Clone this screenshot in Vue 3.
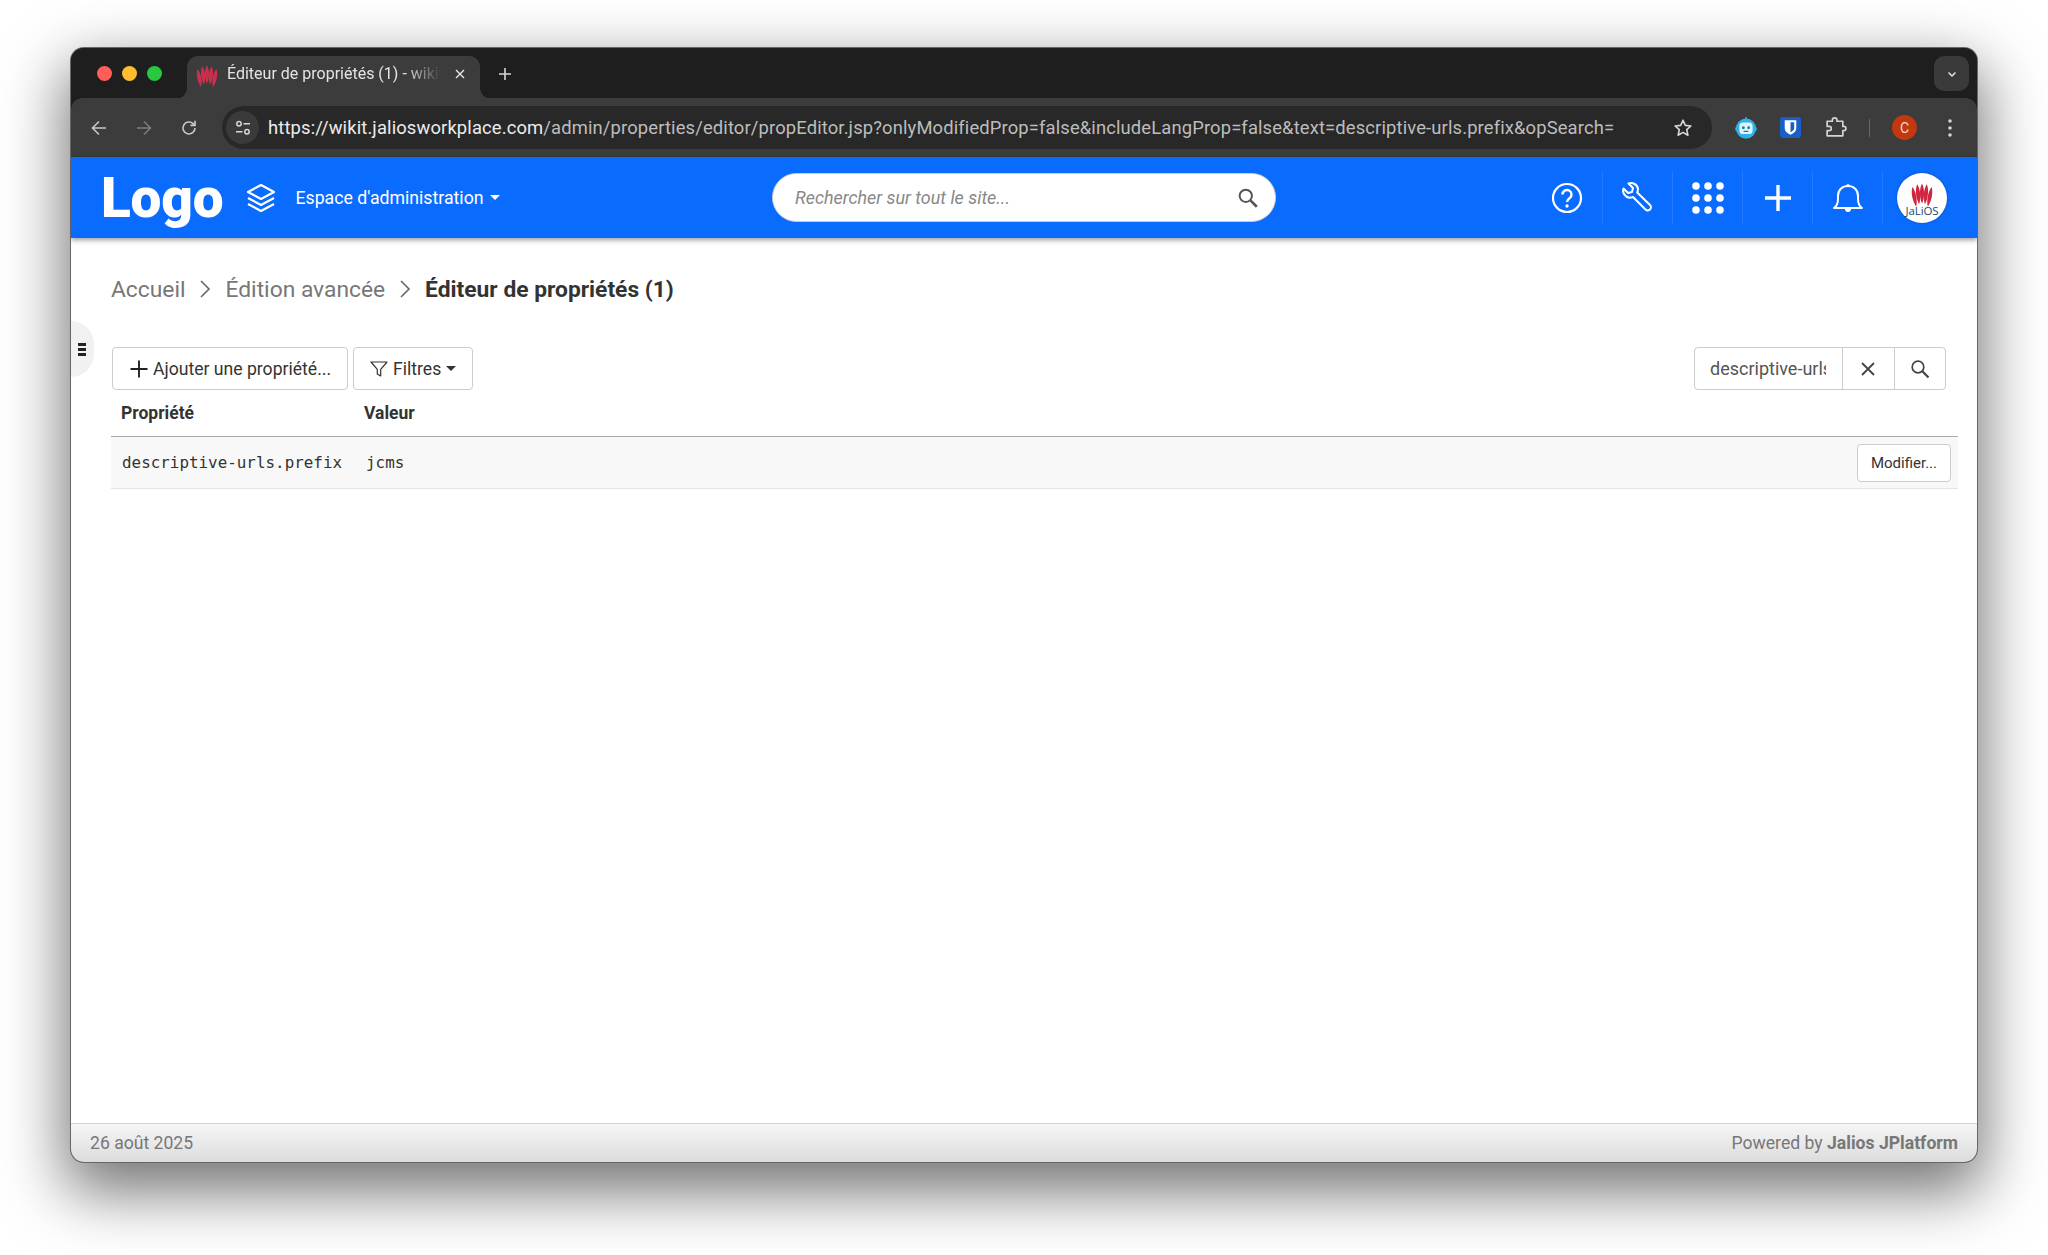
<script setup>
const petals = [-2, -1, 0, 1, 2]
const fan = (a) => `translate(${a * 3.300} ${a * a * 0.900}) rotate(${a * 5.500} 12 22)`
const rows = [{ key: 'descriptive-urls.prefix', value: 'jcms' }]
</script>

<template>
  <div class="desktop">
    <div class="window">
      <div class="tabstrip">
        <div class="lights"><i class="red"></i><i class="yellow"></i><i class="green"></i></div>
        <div class="tab">
          <svg class="favicon" viewBox="0 0 24 24">
            <g fill="#c9304f">
              <path v-for="a in petals" :key="a" d="M12 22.500 C8.800 16 9.300 7 12 2.500 C14.700 7 15.200 16 12 22.500Z" :transform="fan(a)" />
            </g>
          </svg>
          <span class="tab-title">Éditeur de propriétés (1) - wikit</span>
          <svg class="tab-close" viewBox="0 0 12 12"><path d="M2 2l8 8M10 2l-8 8" stroke="#e8e8e8" stroke-width="1.4" /></svg>
        </div>
        <svg class="new-tab" viewBox="0 0 14 14"><path d="M7 1v12M1 7h12" stroke="#d8d8d8" stroke-width="1.6" /></svg>
        <div class="tab-menu"><svg viewBox="0 0 12 12"><path d="M2.5 4.5L6 8l3.5-3.5" fill="none" stroke="#e4e4e4" stroke-width="1.5" /></svg></div>
      </div>

      <div class="toolbar">
        <svg class="nav back" viewBox="0 0 18 18"><path d="M16 9H2.5M9 2.5L2.5 9 9 15.5" fill="none" stroke="#c8c8c8" stroke-width="1.6" /></svg>
        <svg class="nav fwd" viewBox="0 0 18 18"><path d="M2 9h13.5M9 2.5L15.5 9 9 15.5" fill="none" stroke="#7c7c7c" stroke-width="1.6" /></svg>
        <svg class="nav reload" viewBox="0 0 18 18"><path d="M15 9a6 6 0 1 1-1.9-4.4L15 6.3M15 1.8v4.6h-4.6" fill="none" stroke="#c8c8c8" stroke-width="1.6" /></svg>
        <div class="omnibox">
          <div class="site-info">
            <svg viewBox="0 0 18 18"><g fill="none" stroke="#d8d8d8" stroke-width="1.5"><circle cx="5" cy="4.8" r="2.2" /><path d="M9.5 4.8h6.5M2 12.8h6.5" /><circle cx="13" cy="12.8" r="2.2" /></g></svg>
          </div>
          <div class="url"><span class="host">https://wikit.jaliosworkplace.com</span>/admin/properties/editor/propEditor.jsp?onlyModifiedProp=false&amp;includeLangProp=false&amp;text=descriptive-urls.prefix&amp;opSearch=</div>
          <svg class="star" viewBox="0 0 20 20"><path d="M10 2.2l2.3 5.2 5.6.6-4.2 3.7 1.2 5.5L10 14.4l-4.9 2.8 1.2-5.5L2.100 8l5.600-.6z" fill="none" stroke="#d8d8d8" stroke-width="1.6" stroke-linejoin="round" /></svg>
        </div>
        <div class="ext-icons">
          <svg class="ext robot" viewBox="0 0 20 20"><circle cx="10" cy="10.500" r="8.400" fill="#2fb2ea" /><rect x="1" y="9" width="18" height="3.500" rx="1.500" fill="#2fb2ea" /><path d="M10 1v2.500" stroke="#2fb2ea" stroke-width="1.400" /><rect x="4.500" y="5.500" width="11" height="9.500" rx="3" fill="#dff4fc" /><circle cx="7.800" cy="9.800" r="1.200" fill="#1a7fb0" /><circle cx="12.200" cy="9.800" r="1.200" fill="#1a7fb0" /><path d="M8 12.800h4" stroke="#1a7fb0" /></svg>
          <svg class="ext warden" viewBox="0 0 20 20"><rect width="20" height="20" rx="3" fill="#1a5fc8" /><path d="M4.500 3h11v7.500c0 3.400-3 5.300-5.500 6.500-2.500-1.200-5.500-3.100-5.500-6.500z" fill="#fff" /><path d="M10 5h3.500v5.500c0 2-1.800 3.200-3.500 4.100z" fill="#1a5fc8" /></svg>
          <svg class="ext puzzle" viewBox="0 0 22 22"><path d="M3 5h5V4a2.200 2.200 0 0 1 4.400 0v1H18v5h1a2 2 0 0 1 0 4h-1v5H3v-5h2a2 2 0 0 0 0-4H3z" fill="none" stroke="#d4d4d4" stroke-width="1.600" stroke-linejoin="round" /></svg>
          <span class="tool-sep"></span>
          <span class="profile">C</span>
          <svg class="kebab" viewBox="0 0 6 20"><g fill="#d4d4d4"><circle cx="3" cy="3" r="1.800" /><circle cx="3" cy="10" r="1.800" /><circle cx="3" cy="17" r="1.800" /></g></svg>
        </div>
      </div>

      <header class="topbar">
        <div class="brand">
          <span class="logo">Logo</span>
          <svg class="layers" viewBox="0 0 32 32"><g fill="none" stroke="#fff" stroke-width="2.200" stroke-linejoin="round"><path d="M16 3L29 10 16 17 3 10z" /><path d="M3 16l13 7 13-7" /><path d="M3 22l13 7 13-7" /></g></svg>
          <span class="space">Espace d'administration</span><i class="caret white"></i>
        </div>
        <div class="site-search">
          <span>Rechercher sur tout le site...</span>
          <svg viewBox="0 0 20 20"><circle cx="8" cy="8" r="5.600" fill="none" stroke="#555" stroke-width="1.800" /><path d="M12.200 12.200L18 18" stroke="#555" stroke-width="2.400" /></svg>
        </div>
        <nav class="actions">
          <div class="action first">
            <svg viewBox="0 0 32 32"><circle cx="16" cy="16" r="14" fill="none" stroke="#fff" stroke-width="2.200" /><path d="M11.500 12.500a4.500 4.500 0 1 1 7 3.700c-1.600 1.100-2.500 2-2.500 3.800" fill="none" stroke="#fff" stroke-width="2.400" /><circle cx="16" cy="24" r="1.700" fill="#fff" /></svg>
          </div>
          <div class="action">
            <svg viewBox="0 0 32 32"><path d="M1.500 6.500L6 11l4-1 1-4-4.500-4.500c4-1.500 9 1 9.500 5.500 0 1.500-.3 2.500-.8 3.500L28 23c1.500 1.500 1 3.500 0 4.500s-3 1.500-4.500 0L11 15c-1 .5-2 .7-3.500.7C3 15.200 0 10.500 1.500 6.500z" fill="none" stroke="#fff" stroke-width="2" stroke-linejoin="round" /></svg>
          </div>
          <div class="action">
            <svg viewBox="0 0 32 32"><g fill="#fff"><template v-for="y in [4, 16, 28]" :key="y"><circle v-for="x in [4, 16, 28]" :key="x" :cx="x" :cy="y" r="3.800" /></template></g></svg>
          </div>
          <div class="action">
            <svg viewBox="0 0 32 32"><path d="M16 3v26M3 16h26" stroke="#fff" stroke-width="3.400" /></svg>
          </div>
          <div class="action">
            <svg viewBox="0 0 32 32"><path d="M2 26c3-2 4-5 4-9v-3c0-6 4-10 10-10s10 4 10 10v3c0 4 1 7 4 9z" fill="none" stroke="#fff" stroke-width="2" stroke-linejoin="round" /><path d="M13 27a3 3 0 0 0 6 0" fill="#fff" /><circle cx="16" cy="3.500" r="1.500" fill="#fff" /></svg>
          </div>
          <div class="action avatar-cell">
            <div class="avatar">
              <svg viewBox="0 0 24 24">
                <g fill="#d0263f">
                  <path v-for="a in petals" :key="a" d="M12 23.500 C8.800 16 9.300 6.500 12 1.500 C14.700 6.500 15.200 16 12 23.500Z" :transform="fan(a)" />
                </g>
              </svg>
              <span>JaLiOS</span>
            </div>
          </div>
        </nav>
      </header>

      <main class="content">
        <div class="side-handle"><i></i><i></i><i></i></div>
        <div class="breadcrumb">
          <span>Accueil</span>
          <svg viewBox="0 0 12 20"><path d="M2 2l8 8-8 8" fill="none" stroke="#666" stroke-width="1.600" /></svg>
          <span>Édition avancée</span>
          <svg viewBox="0 0 12 20"><path d="M2 2l8 8-8 8" fill="none" stroke="#666" stroke-width="1.600" /></svg>
          <strong>Éditeur de propriétés (1)</strong>
        </div>

        <div class="tools">
          <button class="btn add">
            <svg viewBox="0 0 18 18"><path d="M9 0.500v17M0.500 9h17" stroke="#222" stroke-width="1.900" /></svg>
            Ajouter une propriété...
          </button>
          <button class="btn filter">
            <svg viewBox="0 0 18 18"><path d="M1 2h16l-6.300 7.300V16l-3.400-2V9.300z" fill="none" stroke="#333" stroke-width="1.200" stroke-linejoin="round" /></svg>
            Filtres<i class="caret dark"></i>
          </button>
          <div class="search-group">
            <div class="search-value"><span>descriptive-urls.prefix</span></div>
            <div class="search-btn">
              <svg viewBox="0 0 16 16"><path d="M2 2l12 12M14 2L2 14" stroke="#444" stroke-width="1.800" /></svg>
            </div>
            <div class="search-btn">
              <svg viewBox="0 0 20 20"><circle cx="8" cy="8" r="5.800" fill="none" stroke="#444" stroke-width="1.700" /><path d="M12.300 12.300L18.500 18.500" stroke="#444" stroke-width="2.200" /></svg>
            </div>
          </div>
        </div>

        <div class="table-head"><span>Propriété</span><span>Valeur</span></div>
        <div v-for="r in rows" :key="r.key" class="table-row">
          <code>{{ r.key }}</code>
          <code>{{ r.value }}</code>
          <button class="btn modify">Modifier...</button>
        </div>
      </main>

      <footer class="foot">
        <span>26 août 2025</span>
        <span>Powered by <b>Jalios JPlatform</b></span>
      </footer>
    </div>
  </div>
</template>

<style>
html, body { margin: 0; background: #fff; }
</style>

<style scoped>
.desktop {
  box-sizing: border-box;
  width: 2048px;
  height: 1255px;
  padding: 48px 71px 93px 71px;
  background: #fff;
  overflow: hidden;
  font-family: Roboto, "Liberation Sans", sans-serif;
}
.window {
  height: 100%;
  display: flex;
  flex-direction: column;
  border-radius: 13px;
  overflow: hidden;
  background: #1e1e1e;
  box-shadow: 0 0 0 1px #666, 0 24px 62px 6px rgba(0, 0, 0, 0.55);
}
.tabstrip {
  height: 51px;
  flex: none;
  display: flex;
  align-items: flex-end;
  background: #1e1e1e;
  position: relative;
}
.lights {
  display: flex;
  gap: 10px;
  align-self: flex-start;
  margin: 18px 0 0 26px;
  width: 90px;
}
.lights i { width: 15px; height: 15px; border-radius: 50%; }
.red { background: #ff5f57; }
.yellow { background: #febc2e; }
.green { background: #28c840; }
.tab {
  width: 293px;
  height: 43px;
  box-sizing: border-box;
  display: flex;
  align-items: center;
  padding: 0 14px 8px 9px;
  background: #3c3c3c;
  border-radius: 11px 11px 0 0;
  position: relative;
}
.tab::before, .tab::after {
  content: "";
  position: absolute;
  bottom: 0;
  width: 11px;
  height: 11px;
}
.tab::before { left: -11px; background: radial-gradient(circle at 0 0, #1e1e1e 10.500px, #3c3c3c 11px); }
.tab::after { right: -11px; background: radial-gradient(circle at 100% 0, #1e1e1e 10.500px, #3c3c3c 11px); }
.favicon { width: 22px; height: 22px; flex: none; overflow: visible; }
.tab-title {
  flex: 1;
  margin-left: 9px;
  font-size: 16px;
  color: #e4e4e4;
  white-space: nowrap;
  overflow: hidden;
  -webkit-mask-image: linear-gradient(to right, #000 80%, transparent 97%);
  mask-image: linear-gradient(to right, #000 80%, transparent 97%);
}
.tab-close { width: 12px; height: 12px; flex: none; margin-left: 6px; }
.new-tab { width: 14px; height: 14px; align-self: flex-start; margin: 19px 0 0 18px; }
.tab-menu {
  margin-left: auto;
  margin-right: 8px;
  align-self: flex-start;
  margin-top: 8px;
  width: 35px;
  height: 35px;
  border-radius: 10px;
  background: #3a3a3a;
  display: flex;
  align-items: center;
  justify-content: center;
}
.tab-menu svg { width: 12px; height: 12px; }

.toolbar {
  height: 59px;
  flex: none;
  display: flex;
  align-items: center;
  background: #3c3c3c;
  border-radius: 12px 12px 0 0;
  margin-top: -1px;
  position: relative;
  padding-left: 19px;
  box-sizing: border-box;
}
.nav { width: 18px; height: 18px; flex: none; }
.fwd { margin-left: 27px; }
.reload { margin-left: 27px; }
.omnibox {
  margin-left: 24px;
  width: 1490px;
  height: 43px;
  box-sizing: border-box;
  flex: none;
  display: flex;
  align-items: center;
  background: #282828;
  border-radius: 22px;
  padding: 0 19px 0 4px;
}
.site-info {
  width: 33px;
  height: 33px;
  border-radius: 50%;
  background: #3a3a3a;
  flex: none;
  display: flex;
  align-items: center;
  justify-content: center;
}
.site-info svg { width: 18px; height: 18px; }
.url {
  margin-left: 9px;
  width: 1350px;
  flex: none;
  font-size: 18.400px;
  letter-spacing: 0.130px;
  color: #bdbdbd;
  white-space: nowrap;
  overflow: hidden;
}
.host { color: #ececec; }
.star { width: 20px; height: 20px; margin-left: auto; flex: none; }
.ext-icons {
  display: flex;
  align-items: center;
  margin-left: 22px;
}
.robot { width: 24px; height: 24px; }
.warden { width: 21px; height: 21px; margin-left: 22px; }
.puzzle { width: 23px; height: 23px; margin-left: 23px; }
.tool-sep { width: 1px; height: 18px; background: #666; margin-left: 22px; }
.profile {
  width: 25px;
  height: 25px;
  margin-left: 22px;
  border-radius: 50%;
  background: #c2380f;
  color: #f4d8cc;
  font-size: 14px;
  display: flex;
  align-items: center;
  justify-content: center;
}
.kebab { width: 6px; height: 20px; margin-left: 30px; }

.topbar {
  height: 81px;
  flex: none;
  display: flex;
  align-items: center;
  background: #0a6cff;
  box-shadow: 0 2px 5px rgba(0, 0, 0, 0.4);
  position: relative;
  z-index: 1;
}
.brand {
  width: 701px;
  flex: none;
  display: flex;
  align-items: center;
  box-sizing: border-box;
  padding-left: 30px;
  color: #fff;
}
.logo { font-size: 55px; font-weight: 900; line-height: 1; margin-top: 2px; letter-spacing: -0.200px; }
.layers { width: 32px; height: 32px; margin-left: 21px; }
.space { font-size: 17.700px; margin-left: 19px; }
.caret {
  display: inline-block;
  width: 0;
  height: 0;
  margin-left: 6px;
  border-left: 5px solid transparent;
  border-right: 5px solid transparent;
}
.caret.white { border-top: 5px solid #fff; }
.caret.dark { border-top: 5px solid #333; margin-left: 0; }
.site-search {
  width: 504px;
  height: 49px;
  flex: none;
  box-sizing: border-box;
  display: flex;
  align-items: center;
  justify-content: space-between;
  padding: 0 16px 0 22px;
  background: #fff;
  border-radius: 25px;
  border: 1px solid #ccc;
  font-size: 17.900px;
  font-style: italic;
  color: #888;
}
.site-search svg { width: 22px; height: 22px; }
.actions { margin-left: auto; display: flex; align-items: center; height: 60px; }
.action {
  width: 70px;
  height: 53px;
  display: flex;
  align-items: center;
  justify-content: center;
  border-left: 1px solid rgba(255, 255, 255, 0.1);
  box-sizing: border-box;
}
.action.first { border-left: 0; }
.action svg { width: 32px; height: 32px; }
.avatar-cell { width: 95px; justify-content: flex-start; padding-left: 14px; }
.avatar {
  width: 50px;
  height: 50px;
  border-radius: 50%;
  background: #fff;
  box-shadow: 0 0 3px rgba(0, 0, 0, 0.3);
  display: flex;
  flex-direction: column;
  align-items: center;
  justify-content: flex-end;
  padding-bottom: 7px;
  box-sizing: border-box;
}
.action .avatar svg { width: 22px; height: 24px; overflow: visible; }
.avatar span {
  font-size: 11.500px;
  line-height: 11px;
  color: #1c4a6e;
  letter-spacing: -0.100px;
  font-family: "Open Sans", sans-serif;
}

.content {
  flex: 1;
  position: relative;
  padding: 0 19px 0 40px;
  min-height: 0;
  background: #fff;
}
.side-handle {
  position: absolute;
  left: 0;
  top: 83px;
  width: 23px;
  height: 56px;
  background: #f1f1f1;
  border-radius: 0 28px 28px 0;
  display: flex;
  flex-direction: column;
  justify-content: center;
  gap: 2px;
  padding-left: 7px;
  box-sizing: border-box;
}
.side-handle i { width: 8px; height: 3px; background: #222; }
.breadcrumb {
  display: flex;
  align-items: center;
  height: 28px;
  margin-top: 37px;
  font-size: 22.800px;
  color: #777;
}
.breadcrumb span:first-child { margin-right: 14px; }
.breadcrumb svg { width: 12px; height: 20px; }
.breadcrumb svg + span { margin: 0 14px; }
.breadcrumb strong { color: #333; font-weight: 700; margin-left: 14px; }
.tools {
  display: flex;
  align-items: stretch;
  height: 43px;
  margin-top: 44px;
  padding: 0 12px 0 1px;
}
.btn {
  font-family: inherit;
  background: #fff;
  border: 1px solid #ccc;
  border-radius: 4px;
  color: #333;
  padding: 0;
  display: flex;
  align-items: center;
  box-sizing: border-box;
}
.btn.add {
  width: 236px;
  font-size: 17.600px;
  padding-left: 17px;
  gap: 5px;
}
.btn.add svg { width: 18px; height: 18px; }
.btn.filter {
  width: 120px;
  margin-left: 5px;
  font-size: 17.600px;
  padding-left: 16px;
  gap: 5px;
}
.btn.filter svg { width: 18px; height: 18px; }
.search-group {
  margin-left: auto;
  width: 252px;
  display: flex;
  box-sizing: border-box;
  border: 1px solid #ccc;
  border-radius: 4px;
}
.search-value {
  width: 147px;
  flex: none;
  box-sizing: border-box;
  padding: 0 15px;
  display: flex;
  align-items: center;
  overflow: hidden;
  font-size: 18px;
  color: #555;
  white-space: nowrap;
}
.search-value span { display: block; width: 116px; overflow: hidden; }
.search-btn {
  flex: 1;
  border-left: 1px solid #ccc;
  display: flex;
  align-items: center;
  justify-content: center;
}
.search-btn svg { width: 16px; height: 16px; }
.search-btn:last-child svg { width: 20px; height: 20px; }
.table-head {
  display: grid;
  grid-template-columns: 243px 1fr;
  align-items: center;
  height: 46px;
  padding-left: 10px;
  border-bottom: 1px solid #aaa;
  font-size: 17.500px;
  font-weight: 700;
  color: #333;
}
.table-row {
  display: grid;
  grid-template-columns: 244px 1fr auto;
  align-items: center;
  height: 51px;
  padding: 0 7px 0 11px;
  background: #f8f8f8;
  border-bottom: 1px solid #e4e4e4;
}
code {
  font-family: "DejaVu Sans Mono", "Liberation Mono", monospace;
  font-size: 15.900px;
  color: #333;
}
.btn.modify {
  width: 94px;
  height: 38px;
  justify-content: center;
  font-size: 15px;
}
.foot {
  height: 39px;
  flex: none;
  box-sizing: border-box;
  display: flex;
  align-items: center;
  justify-content: space-between;
  padding: 0 19px 0 19px;
  background: linear-gradient(#f6f6f6, #dcdcdc);
  border-top: 1px solid #d2d2d2;
  font-size: 17.600px;
  color: #777;
}
.foot b { font-weight: 700; }
</style>
